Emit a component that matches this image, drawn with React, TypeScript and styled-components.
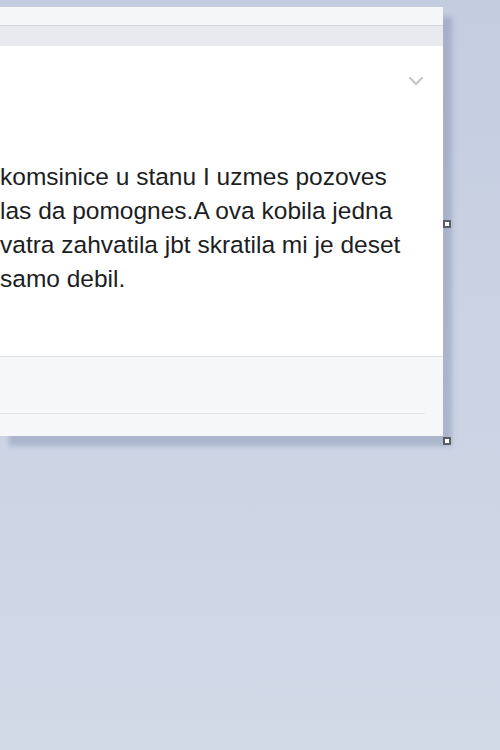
import * as React from 'react';
import styled, { createGlobalStyle } from 'styled-components';

const GlobalStyle = createGlobalStyle`
  html, body {
    margin: 0;
    padding: 0;
    height: 100%;
  }
  body {
    background: linear-gradient(180deg, #c4cce0 0%, #cbd3e4 50%, #d2d9e7 100%);
    font-family: 'Liberation Sans', Arial, sans-serif;
    overflow: hidden;
  }
`;

const Page = styled.div`
  width: 500px;
  height: 750px;
  padding-top: 7px;
  box-sizing: border-box;
`;

const Card = styled.div`
  position: relative;
  width: 443px;
  background: #ffffff;
  box-shadow: 9px 10px 5px rgba(70, 90, 130, 0.25);
`;

const TopStrip = styled.div`
  height: 18px;
  background: #f5f6f8;
  border-bottom: 1px solid #d4d6db;
`;

const GrayBar = styled.div`
  height: 20px;
  background: #e9eaed;
`;

const Body = styled.div`
  position: relative;
  height: 311px;
  padding-top: 114px;
  box-sizing: border-box;
  border-bottom: 1px solid #dfe1e5;
`;

const Chevron = styled.button`
  position: absolute;
  top: 29px;
  right: 18px;
  width: 18px;
  height: 12px;
  padding: 0;
  border: none;
  background: none;
  display: flex;
  align-items: center;
  justify-content: center;
`;

const Text = styled.p`
  margin: 0;
  font-size: 24.5px;
  line-height: 34px;
  color: #1c1e24;
`;

const Line = styled.span`
  display: block;
  white-space: nowrap;
`;

const Footer = styled.div`
  height: 79px;
  background: #f6f7f9;
  padding-top: 56px;
  box-sizing: border-box;
`;

const FooterRule = styled.div`
  width: 425px;
  height: 1px;
  background: #e2e4e8;
`;

const Handle = styled.span<{ $corner?: boolean }>`
  position: absolute;
  left: 100%;
  width: 8px;
  height: 8px;
  box-sizing: border-box;
  background: #ffffff;
  border: 2px solid #5a5d63;
  ${(p) => (p.$corner ? 'top: 100%; margin-top: 1px;' : 'top: 50%; margin-top: -2px;')}
`;

const lines = [
  'komsinice u stanu I uzmes pozoves',
  'las da pomognes.A ova kobila jedna',
  'vatra zahvatila jbt skratila mi je deset',
  'samo debil.',
];

const App: React.FC = () => (
  <>
    <GlobalStyle />
    <Page>
      <Card>
        <TopStrip />
        <GrayBar />
        <Body>
          <Chevron aria-label="options">
            <svg width="16" height="10" viewBox="0 0 16 10">
              <path d="M1.5 1.5 L8 8 L14.5 1.5" fill="none" stroke="#c2c5cb" strokeWidth="2.2" />
            </svg>
          </Chevron>
          <Text>
            {lines.map((l) => (
              <Line key={l}>{l}</Line>
            ))}
          </Text>
        </Body>
        <Footer>
          <FooterRule />
        </Footer>
        <Handle />
        <Handle $corner />
      </Card>
    </Page>
  </>
);

export default App;
